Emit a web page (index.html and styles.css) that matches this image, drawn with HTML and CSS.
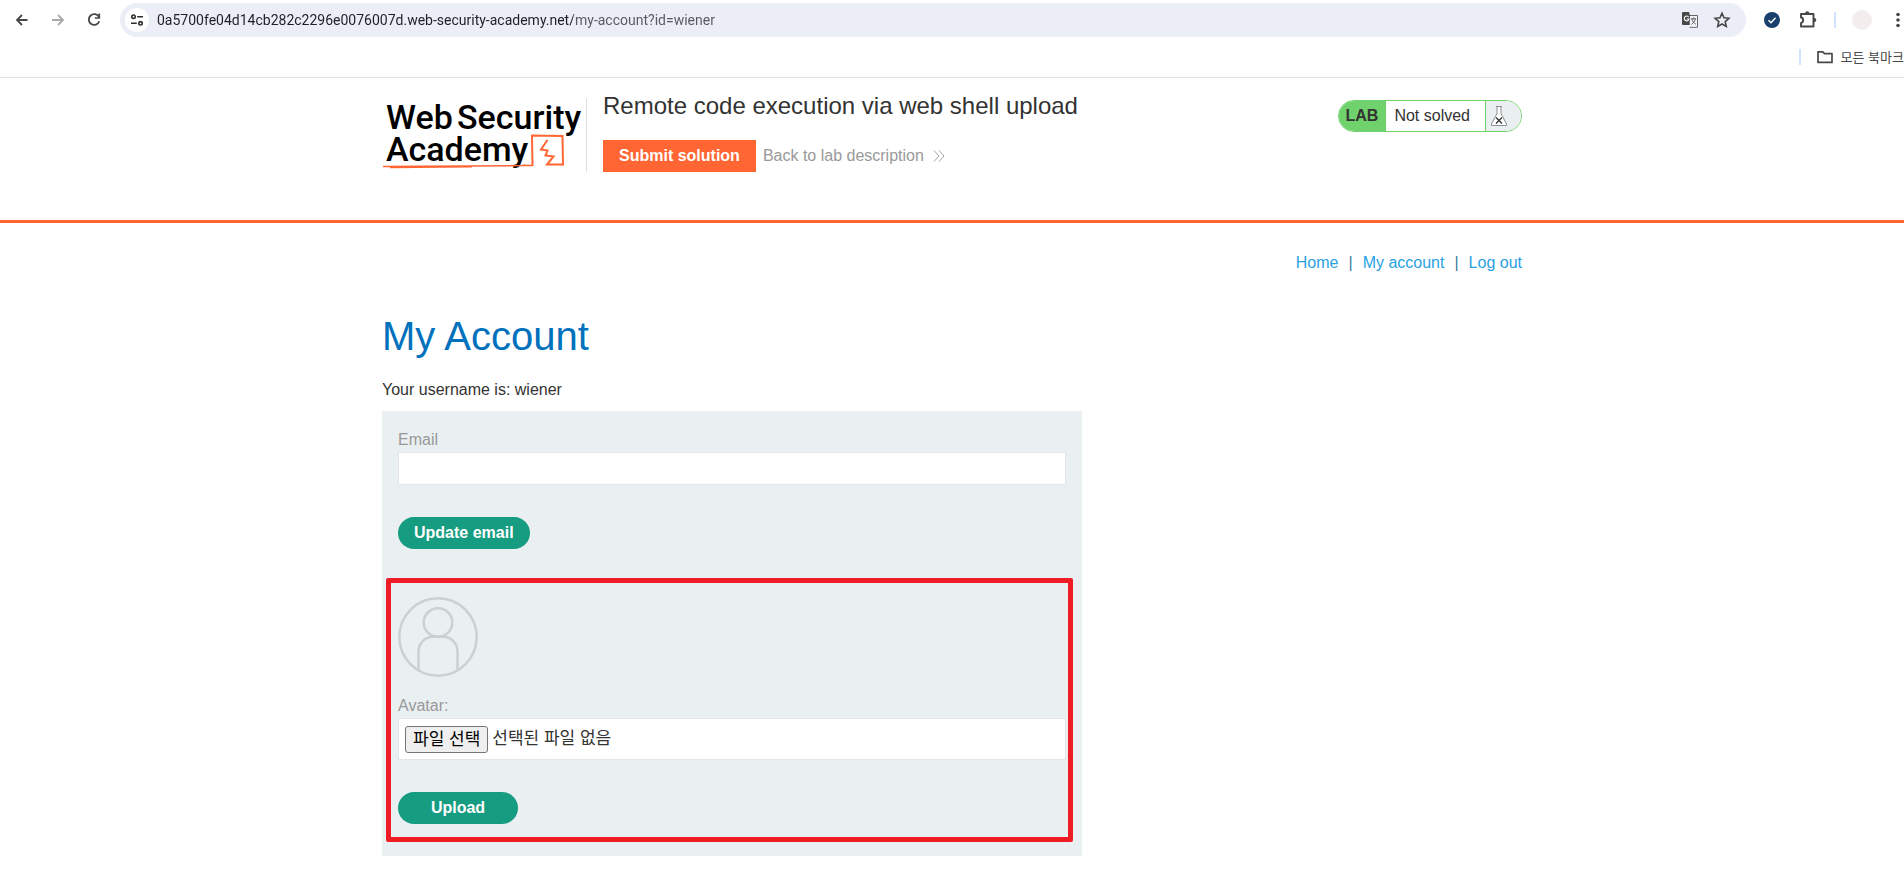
FILE: index.html
```html
<!DOCTYPE html>
<html lang="en">
<head>
<meta charset="utf-8">
<title>Remote code execution via web shell upload</title>
<link rel="stylesheet" href="styles.css">
</head>
<body>
<div class="browser">
  <div class="toolbar">
    <button class="tool" type="button" aria-label="Back"><svg width="16" height="16" viewBox="0 0 16 16"><path d="M13.500 8H3.500M8 3L3 8l5 5" fill="none" stroke="#474747" stroke-width="1.800"/></svg></button>
    <button class="tool tool-forward" type="button" aria-label="Forward"><svg width="16" height="16" viewBox="0 0 16 16"><path d="M2 8h10.500M8 3l5 5-5 5" fill="none" stroke="#a9a9a9" stroke-width="1.800"/></svg></button>
    <button class="tool tool-reload" type="button" aria-label="Reload"><svg width="16" height="16" viewBox="0 0 16 16"><path d="M13 5A5.400 5.400 0 1 0 13.300 9.300" fill="none" stroke="#474747" stroke-width="1.800"/><path d="M13.300 1.500V6H8.800" fill="none" stroke="#474747" stroke-width="1.700"/></svg></button>
    <div class="omnibox">
      <button class="site-info" type="button" aria-label="Site information"><svg width="14" height="14" viewBox="0 0 14 14" fill="none" stroke="#2b2d31" stroke-width="1.600"><circle cx="3.500" cy="3.700" r="1.700"/><path d="M7.200 3.700H13M1 10.300h5.800"/><circle cx="10.500" cy="10.300" r="1.700"/></svg></button>
      <input class="url" type="text" aria-label="Address" value="0a5700fe04d14cb282c2296e0076007d.web-security-academy.net/my-account?id=wiener">
      <button class="tool" type="button" aria-label="Translate"><svg width="18" height="18" viewBox="0 0 18 18"><path d="M2 1h6l3.500 13H2a1 1 0 0 1-1-1V2a1 1 0 0 1 1-1z" fill="#474747"/><path d="M7.700 6.200A2.400 2.400 0 1 0 8 8H5.700" fill="none" stroke="#fff" stroke-width="1.100"/><path d="M9 4.500h7.500v11.800H8.600" fill="#f4f5fb" stroke="#666" stroke-width="1"/><path d="M9.800 7.800h5.400M12.500 6.500v1.300M14.300 8c-.6 2.500-2 4.200-4 5.400M10.800 8.200c.7 2.200 2.200 4 4 5" fill="none" stroke="#555" stroke-width="1"/></svg></button>
      <button class="tool tool-star" type="button" aria-label="Bookmark"><svg width="18" height="18" viewBox="0 0 18 18"><path d="M9 2.300l2 4.500 4.900.5-3.700 3.300 1.100 4.900L9 13l-4.300 2.500 1.100-4.900L2.100 7.300 7 6.800z" fill="none" stroke="#474747" stroke-width="1.600"/></svg></button>
    </div>
    <button class="tool tool-check" type="button" aria-label="Extension"><svg width="16" height="16" viewBox="0 0 16 16"><circle cx="8" cy="8" r="8" fill="#1a406b"/><path d="M4.500 8.200l2.500 2.500 4.500-5" fill="none" stroke="#fff" stroke-width="1.500"/></svg></button>
    <button class="tool tool-puzzle" type="button" aria-label="Extensions"><svg width="18" height="18" viewBox="0 0 18 18"><path d="M2 3h12.500v12.500H2v-3.500c2.800-.3 2.800-5.200 0-5.500z" fill="none" stroke="#474747" stroke-width="1.900" stroke-linejoin="round"/><path d="M6.500 2.500a1.800 1.800 0 0 1 3.600 0zM15 7.300a1.800 1.800 0 0 1 0 3.600z" fill="#474747" stroke="#474747"/></svg></button>
    <span class="separator"></span>
    <button class="profile" type="button" aria-label="Profile"></button>
    <button class="tool" type="button" aria-label="Menu"><svg width="4" height="16" viewBox="0 0 4 16" fill="#474747"><circle cx="2" cy="2.500" r="1.800"/><circle cx="2" cy="8" r="1.800"/><circle cx="2" cy="13.500" r="1.800"/></svg></button>
  </div>
  <div class="bookmarks">
    <span class="separator"></span>
    <button class="folder" type="button"><svg width="16" height="14" viewBox="0 0 16 14"><path d="M1 1.800h4.700l1.800 1.800H15v8.800H1z" fill="none" stroke="#474747" stroke-width="1.700" stroke-linejoin="round"/></svg><span lang="ko">모든 북마크</span></button>
  </div>
</div>

<header class="lab-header">
  <div class="container lab-row">
    <a class="logo" href="#" aria-label="Web Security Academy">
      <svg width="201" height="74" viewBox="0 0 201 74">
        <g class="logo-text"><text x="4" y="31">Web</text><text x="75" y="31">Security</text><text x="4" y="63">Academy</text></g>
        <path d="M1 68.500L142 67.600M140 67.300L150.500 67.500M8 69.500L90 68.800" fill="none" stroke="#ff6633" stroke-width="1.500"/>
        <path d="M150.500 68L150 37.500L180.500 38L181 66.500L165 66.500L171.500 58.500L163.500 57.500L165.500 52.500L159 51.500L165.500 42" fill="none" stroke="#ff6633" stroke-width="2"/>
      </svg>
    </a>
    <div class="lab-title">
      <h2>Remote code execution via web shell upload</h2>
      <div class="lab-actions">
        <button class="submit" type="button">Submit solution</button>
        <a class="back" href="#">Back to lab description <svg width="12" height="12" viewBox="0 0 12 12"><path d="M1 .5L6 6l-5 5.500M6 .5L11 6l-5 5.500" fill="none" stroke="#a0a0a0"/></svg></a>
      </div>
    </div>
    <div class="status">
      <span class="status-lab">LAB</span>
      <span class="status-text">Not solved</span>
      <span class="status-icon"><svg width="18" height="22" viewBox="0 0 18 22"><path d="M6 1.500h6M7 2v6.500L1.500 19v1.500h15V19L11 8.500V2" fill="#fff" stroke="#8b8d90"/><path d="M6 12.500l6 6M12 12.500l-6 6" stroke="#333" stroke-width="1.300"/></svg></span>
    </div>
  </div>
</header>

<main class="container">
  <nav class="links"><a href="#">Home</a><span>|</span><a href="#">My account</a><span>|</span><a href="#">Log out</a></nav>
  <h1>My Account</h1>
  <p class="username">Your username is: wiener</p>
  <div class="panel">
    <form class="form">
      <label class="field-label" for="email">Email</label>
      <input class="email" id="email" type="email">
      <button class="action" type="button">Update email</button>
    </form>
    <form class="form avatar-form">
      <svg class="avatar" width="80" height="80" viewBox="0 0 80 80" fill="none" stroke="#cbd0d0" stroke-width="2.500"><circle cx="40" cy="40" r="38.700"/><circle cx="40" cy="25.500" r="14.300"/><path d="M20.500 73V55C20.500 46 27 39.800 35 39.800h10C53 39.800 59.500 46 59.500 55v18"/></svg>
      <label class="field-label" for="avatar">Avatar:</label>
      <div class="file">
        <input class="file-input" id="avatar" type="file">
        <label class="file-button" for="avatar" lang="ko">파일 선택</label>
        <span class="file-name" lang="ko">선택된 파일 없음</span>
      </div>
      <button class="action upload" type="button">Upload</button>
    </form>
    <div class="highlight"></div>
  </div>
</main>
</body>
</html>
```
FILE: styles.css
```css
* { box-sizing: border-box; }
body {
  margin: 0;
  background: #fff;
  color: #333332;
  font: 16px/24px "Liberation Sans", "Noto Sans CJK KR", sans-serif;
}
button { margin: 0; padding: 0; border: 0; background: none; font: inherit; cursor: pointer; }
a { text-decoration: none; }
svg { display: block; flex: none; }

.browser { border-bottom: 1px solid #dfe0e2; overflow: hidden; }
.toolbar { display: flex; align-items: center; height: 40px; padding: 0 4px 0 14px; }
.tool { flex: none; }
.tool-forward, .tool-reload { margin-left: 20px; }
.omnibox {
  display: flex;
  align-items: center;
  flex: 1;
  height: 34px;
  margin: 0 18px;
  padding: 0 15px 0 5px;
  border-radius: 17px;
  background: #ebeef7;
}
.site-info {
  display: grid;
  place-items: center;
  flex: none;
  width: 24px;
  height: 24px;
  border-radius: 50%;
  background: #fff;
}
.url {
  flex: 1;
  min-width: 0;
  margin: 0 8px;
  padding: 0;
  border: 0;
  outline: 0;
  background: linear-gradient(90deg, #1f2023 416px, #55585d 416px) text;
  -webkit-text-fill-color: transparent;
  font: 14px/20px Roboto, "Noto Sans", sans-serif;
}
.tool-star { margin-left: 14px; }
.tool-puzzle { margin: 0 17px 0 19px; }
.separator { flex: none; width: 2px; height: 16px; background: #d3e3fd; }
.profile { flex: none; width: 20px; height: 20px; margin: 0 24px 0 16px; border-radius: 50%; background: #f3eeed; }
.bookmarks { display: flex; align-items: center; justify-content: flex-end; height: 37px; padding-bottom: 3px; }
.folder { display: flex; align-items: center; gap: 8px; margin-left: 16px; color: #474747; font: 13px/18px "Noto Sans CJK KR", sans-serif; white-space: nowrap; }

.container { max-width: 1140px; margin: 0 auto; }
.lab-header { border-bottom: 3px solid #ff6633; }
.lab-row { display: flex; align-items: flex-start; padding: 12px 0 48px; }
.logo { margin-top: 8px; padding-right: 3px; border-right: 1px solid #dfe0e2; }
.logo-text { font: 500 34px Roboto, sans-serif; fill: #000; }
.lab-title { flex: 1; margin-left: 16px; }
h2 { margin: 0; font-size: 24px; line-height: 32px; font-weight: 400; }
.lab-actions { display: flex; align-items: center; gap: 7px; margin-top: 18px; }
.submit { height: 32px; padding: 0 16px; background: #ff6633; color: #fff; font-weight: 700; }
.back { display: flex; align-items: center; gap: 9px; color: #999; }
.status {
  display: flex;
  height: 32px;
  margin-top: 10px;
  border: 1px solid #70d26c;
  border-radius: 16px;
  overflow: hidden;
  line-height: 30px;
}
.status-lab { padding: 0 8px 0 7px; background: #70d26c; font-weight: 700; }
.status-text { padding: 0 15px 0 8px; border-right: 1px solid #70d26c; }
.status-icon { display: flex; align-items: center; width: 35px; padding-left: 4px; background: #eaeff2; }

.links { display: flex; justify-content: flex-end; gap: 10px; padding-top: 28px; }
.links a { color: #29a1e2; }
.links span { color: #3a7a9c; }
h1 { margin: 35px 0 0; color: #0071bc; font-size: 40px; line-height: 52px; font-weight: 400; }
.username { margin: 16px 0 9px; }
.panel { position: relative; width: 700px; max-width: 100%; padding: 16px; background: #eaeff2; }
.form { display: flex; flex-direction: column; align-items: flex-start; padding-bottom: 16px; color: #999; }
.field-label { padding-top: 1px; }
.email { width: 100%; height: 33px; padding: 4px; border: 1px solid #e3e5e7; background: #fff; font: inherit; }
.action {
  min-width: 120px;
  height: 32px;
  margin: 32px 0 0;
  padding: 0 16px;
  border-radius: 16px;
  background: #169c80;
  color: #fff;
  font-weight: 700;
}
.avatar-form { padding: 32px 0 16px; }
.avatar { margin-bottom: 16px; }
.file { position: relative; display: flex; align-items: center; gap: 4px; width: 100%; height: 42px; padding: 0 6px; border: 1px solid #e3e5e7; background: #fff; font-size: 17px; }
.file-input { position: absolute; inset: 0; width: 100%; height: 100%; opacity: 0; }
.file-button { padding: 0 7px; border: 1px solid #767676; border-radius: 3px; background: #efefef; color: #000; line-height: 25px; }
.file-name { color: #333332; }
.highlight {
  position: absolute;
  inset: 167px 9px 14px 4px;
  border: 5px solid #ee1c25;
  border-radius: 2px;
  pointer-events: none;
}
```
